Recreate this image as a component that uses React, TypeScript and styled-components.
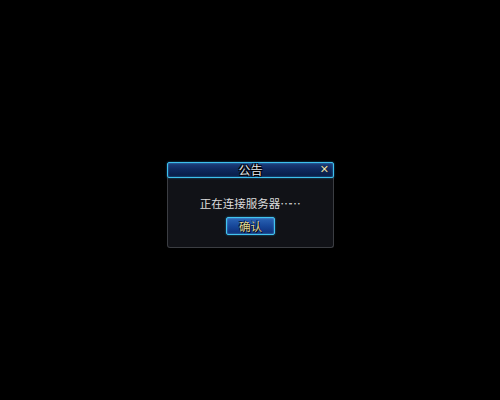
import React from "react";
import styled, { createGlobalStyle } from "styled-components";

const Global = createGlobalStyle`
  html, body { margin: 0; padding: 0; background: #000; }
  body { font-family: "Noto Sans CJK SC", "Noto Sans", sans-serif; }
`;

const Page = styled.div`
  width: 500px;
  height: 400px;
  background: #000;
  display: flex;
  justify-content: center;
  align-items: flex-start;
  padding-top: 162px;
  box-sizing: border-box;
`;

const Dialog = styled.div`
  width: 167px;
  margin-left: 1px;
  display: flex;
  flex-direction: column;
`;

const TitleBar = styled.div`
  position: relative;
  height: 16px;
  box-sizing: border-box;
  border: 1px solid #3cc0ee;
  border-radius: 2px;
  background: linear-gradient(to bottom, #1c3f7e 0%, #0f2a60 45%, #071a44 100%);
  box-shadow: inset 0 0 2px rgba(80, 190, 240, 0.7), 0 0 2px rgba(40, 150, 220, 0.7);
  display: flex;
  align-items: center;
  justify-content: center;
  z-index: 1;
`;

const Title = styled.span`
  color: #e6e6e6;
  font-size: 12px;
  line-height: 14px;
  text-shadow: 1px 1px 0 #000, -1px -1px 0 #000, 1px -1px 0 #000, -1px 1px 0 #000;
`;

const Close = styled.span`
  position: absolute;
  right: 4px;
  top: 0px;
  color: #e8e2b8;
  font-family: "DejaVu Sans", sans-serif;
  font-size: 11px;
  font-weight: bold;
  line-height: 14px;
  text-shadow: 0 0 1px #000;
`;

const Body = styled.div`
  margin-top: -1px;
  height: 71px;
  box-sizing: border-box;
  background: #111217;
  border: 1px solid #3b3d42;
  border-top: none;
  border-radius: 0 0 3px 3px;
  display: flex;
  flex-direction: column;
  align-items: center;
  padding-top: 19px;
`;

const Message = styled.div`
  color: #dcdcdc;
  font-size: 11.5px;
  line-height: 14px;
  white-space: nowrap;
  margin-left: -3px;
`;

const Dots = styled.span`
  letter-spacing: -2.5px;
`;

const Button = styled.button`
  margin-top: 7px;
  width: 49px;
  height: 18px;
  box-sizing: border-box;
  border: 1px solid #41c4f0;
  border-radius: 2px;
  background: linear-gradient(to bottom, #2a63b4 0%, #17479a 50%, #0d2f78 100%);
  box-shadow: inset 0 0 2px rgba(120, 210, 250, 0.7), 0 0 2px rgba(40, 160, 230, 0.7);
  color: #e2d98e;
  font-family: "Noto Sans CJK SC", sans-serif;
  font-size: 11.5px;
  line-height: 14px;
  padding: 0;
  text-shadow: 1px 1px 0 #000, -1px -1px 0 #06184a;
  display: flex;
  align-items: center;
  justify-content: center;
`;

export default function App() {
  return (
    <>
      <Global />
      <Page>
        <Dialog>
          <TitleBar>
            <Title>公告</Title>
            <Close>✕</Close>
          </TitleBar>
          <Body>
            <Message>
              正在连接服务器<Dots>……</Dots>
            </Message>
            <Button>确认</Button>
          </Body>
        </Dialog>
      </Page>
    </>
  );
}
